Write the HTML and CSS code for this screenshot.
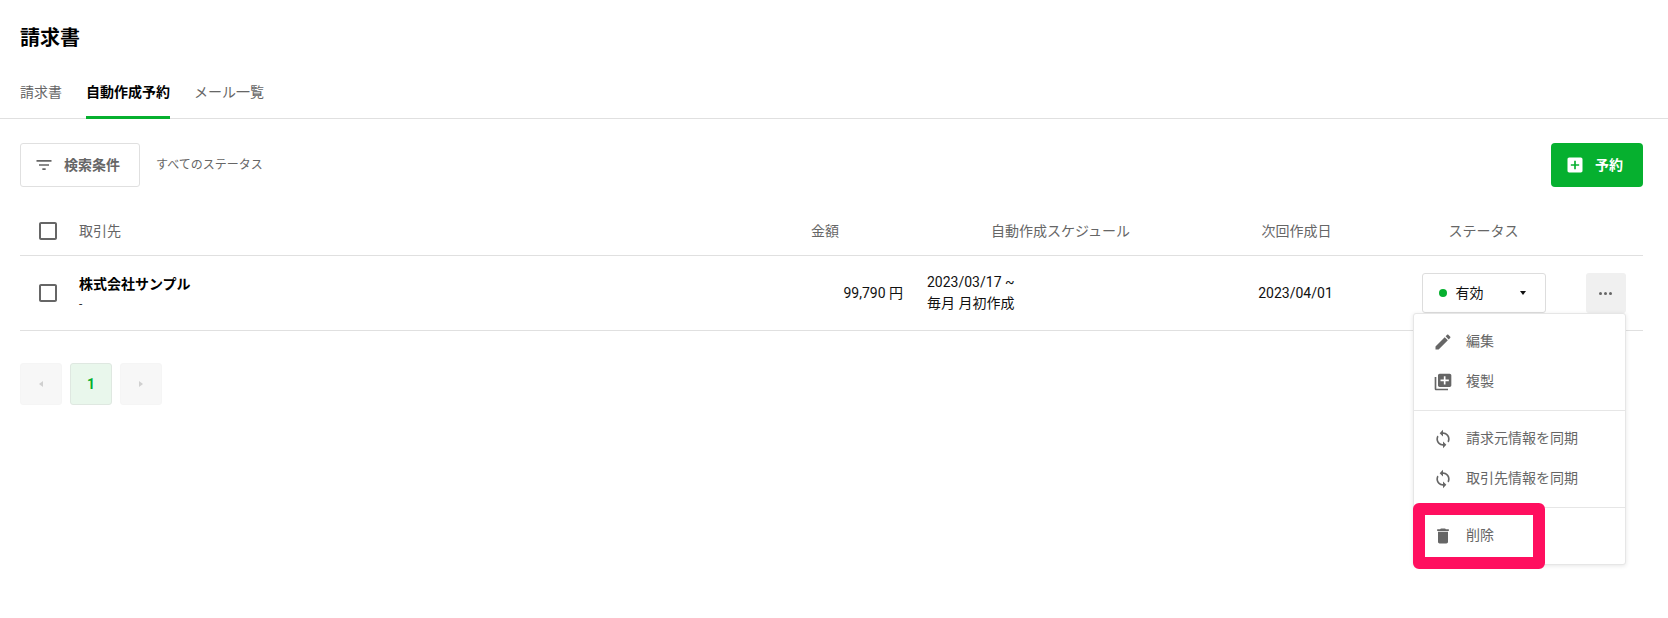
FILE: index.html
```html
<!DOCTYPE html>
<html lang="ja">
<head>
  <meta charset="UTF-8" />
  <title>請求書</title>
  <link rel="stylesheet" href="styles.css">
</head>
<body>
  <header class="page-header">
    <h1>請求書</h1>
    <nav class="tabs">
      <a class="tab">請求書</a>
      <a class="tab active">自動作成予約</a>
      <a class="tab">メール一覧</a>
    </nav>
  </header>

  <main class="content">
    <div class="toolbar">
      <button class="filter-btn" type="button">
        <svg class="icon" viewBox="0 0 24 24"><path d="M10 18h4v-2h-4v2zM3 6v2h18V6H3zm3 7h12v-2H6v2z"/></svg>
        <span class="label">検索条件</span>
      </button>
      <span class="filter-note">すべてのステータス</span>
      <button class="add-btn" type="button">
        <svg class="icon" viewBox="0 0 24 24"><path d="M19 3H5c-1.11 0-2 .9-2 2v14c0 1.1.89 2 2 2h14c1.1 0 2-.9 2-2V5c0-1.1-.9-2-2-2zm-2 10h-4v4h-2v-4H7v-2h4V7h2v4h4v2z"/></svg>
        <span class="label">予約</span>
      </button>
    </div>

    <div class="table-row table-head">
      <div class="cell-check">
        <svg class="check" viewBox="0 0 24 24"><path d="M19 5v14H5V5h14m0-2H5c-1.1 0-2 .9-2 2v14c0 1.1.9 2 2 2h14c1.1 0 2-.9 2-2V5c0-1.1-.9-2-2-2z"/></svg>
      </div>
      <div>取引先</div>
      <div class="center">金額</div>
      <div class="center cell-schedule">自動作成スケジュール</div>
      <div class="center">次回作成日</div>
      <div class="center">ステータス</div>
      <div></div>
    </div>

    <div class="table-row table-body">
      <div class="cell-check">
        <svg class="check" viewBox="0 0 24 24"><path d="M19 5v14H5V5h14m0-2H5c-1.1 0-2 .9-2 2v14c0 1.1.9 2 2 2h14c1.1 0 2-.9 2-2V5c0-1.1-.9-2-2-2z"/></svg>
      </div>
      <div class="partner">
        <strong>株式会社サンプル</strong>
        <span>-</span>
      </div>
      <div class="amount">99,790 円</div>
      <div class="cell-schedule schedule">2023/03/17 ~<br>毎月 月初作成</div>
      <div class="center next-date">2023/04/01</div>
      <div class="center">
        <div class="status-select">
          <i class="dot"></i>
          <span>有効</span>
          <i class="caret"></i>
        </div>
      </div>
      <div class="center">
        <button class="more-btn" type="button"><i></i><i></i><i></i></button>
      </div>
    </div>

    <div class="pager">
      <span class="page-btn"><i class="arrow-left"></i></span>
      <span class="page-btn current">1</span>
      <span class="page-btn"><i class="arrow-right"></i></span>
    </div>
  </main>

  <div class="menu">
    <div class="menu-item">
      <svg class="icon" viewBox="0 0 24 24"><path d="M3 17.25V21h3.75L17.81 9.94l-3.75-3.75L3 17.25zM20.71 7.04c.39-.39.39-1.02 0-1.41l-2.34-2.34c-.39-.39-1.02-.39-1.41 0l-1.83 1.83 3.75 3.75 1.83-1.83z"/></svg>
      <span class="label">編集</span>
    </div>
    <div class="menu-item">
      <svg class="icon" viewBox="0 0 24 24"><path d="M4 6H2v14c0 1.1.9 2 2 2h14v-2H4V6zm16-4H8c-1.1 0-2 .9-2 2v12c0 1.1.9 2 2 2h12c1.1 0 2-.9 2-2V4c0-1.1-.9-2-2-2zm-1 9h-4v4h-2v-4H9V9h4V5h2v4h4v2z"/></svg>
      <span class="label">複製</span>
    </div>
    <hr>
    <div class="menu-item">
      <svg class="icon" viewBox="0 0 24 24"><path d="M12 4V1L8 5l4 4V6c3.31 0 6 2.69 6 6 0 1.01-.25 1.97-.7 2.8l1.46 1.46C19.54 15.03 20 13.57 20 12c0-4.42-3.58-8-8-8zm0 14c-3.31 0-6-2.69-6-6 0-1.01.25-1.97.7-2.8L5.24 7.74C4.46 8.97 4 10.43 4 12c0 4.42 3.58 8 8 8v3l4-4-4-4v3z"/></svg>
      <span class="label">請求元情報を同期</span>
    </div>
    <div class="menu-item">
      <svg class="icon" viewBox="0 0 24 24"><path d="M12 4V1L8 5l4 4V6c3.31 0 6 2.69 6 6 0 1.01-.25 1.97-.7 2.8l1.46 1.46C19.54 15.03 20 13.57 20 12c0-4.42-3.58-8-8-8zm0 14c-3.31 0-6-2.69-6-6 0-1.01.25-1.97.7-2.8L5.24 7.74C4.46 8.97 4 10.43 4 12c0 4.42 3.58 8 8 8v3l4-4-4-4v3z"/></svg>
      <span class="label">取引先情報を同期</span>
    </div>
    <hr>
    <div class="menu-item">
      <svg class="icon" viewBox="0 0 24 24"><path d="M6 19c0 1.1.9 2 2 2h8c1.1 0 2-.9 2-2V7H6v12zM19 4h-3.5l-1-1h-5l-1 1H5v2h14V4z"/></svg>
      <span class="label">削除</span>
    </div>
    <div class="highlight"></div>
  </div>
</body>
</html>
```

FILE: styles.css
```css
* {
  box-sizing: border-box;
  margin: 0;
  padding: 0;
}
body {
  background: #fff;
  color: #111;
  font-family: Roboto, 'Noto Sans CJK JP', sans-serif;
  font-size: 14px;
  line-height: 20px;
  overflow: hidden;
}
button {
  font-family: inherit;
  cursor: pointer;
}
.label {
  margin-bottom: 2px;
}
.page-header {
  height: 119px;
  padding: 24px 20px 0;
  border-bottom: 1px solid #e0e0e0;
}
h1 {
  font-size: 20px;
  font-weight: 700;
  line-height: 28px;
  color: #000;
}
.tabs {
  display: flex;
  gap: 24px;
  margin-top: 19px;
}
.tab {
  height: 48px;
  padding-top: 11px;
  color: #666;
}
.tab.active {
  color: #000;
  font-weight: 700;
  border-bottom: 3px solid #06b02f;
}
.content {
  padding: 24px 25px 0 20px;
}
.toolbar {
  display: flex;
  align-items: center;
  height: 44px;
}
.icon {
  width: 20px;
  height: 20px;
  fill: #666;
  flex: none;
}
.filter-btn {
  display: flex;
  align-items: center;
  gap: 10px;
  width: 120px;
  height: 44px;
  padding-left: 13px;
  background: #fff;
  border: 1px solid #e0e0e0;
  border-radius: 3px;
  color: #666;
  font-size: 14px;
  font-weight: 700;
}
.filter-note {
  margin-left: 16px;
  font-size: 12px;
  color: #666;
}
.add-btn {
  display: flex;
  align-items: center;
  gap: 10px;
  width: 92px;
  height: 44px;
  margin-left: auto;
  padding-left: 14px;
  background: #06b02f;
  border: none;
  border-radius: 4px;
  color: #fff;
  font-size: 14px;
  font-weight: 700;
}
.add-btn .icon {
  fill: #fff;
}
.table-row {
  display: grid;
  grid-template-columns: 59px 668px 156px 291px 205px 169px 75px;
  align-items: center;
  border-bottom: 1px solid #e0e0e0;
}
.table-head {
  height: 49px;
  margin-top: 20px;
  color: #666;
}
.table-body {
  height: 75px;
}
.cell-check {
  display: flex;
  padding-left: 16px;
}
.check {
  width: 24px;
  height: 24px;
  fill: #666;
}
.center {
  display: flex;
  justify-content: center;
}
.cell-schedule {
  padding-left: 24px;
}
.partner strong {
  display: block;
  color: #000;
  font-weight: 700;
  line-height: 22px;
}
.partner span {
  display: block;
  font-size: 12px;
  line-height: 18px;
  color: #333;
}
.amount {
  text-align: right;
}
.schedule {
  line-height: 21px;
}
.next-date {
  padding-right: 2px;
}
.status-select {
  display: flex;
  align-items: center;
  width: 124px;
  height: 40px;
  padding-left: 16px;
  background: #fff;
  border: 1px solid #ddd;
  border-radius: 3px;
}
.dot {
  width: 8px;
  height: 8px;
  margin-right: 9px;
  background: #06b02f;
  border-radius: 50%;
}
.caret {
  width: 0;
  height: 0;
  margin-left: 36px;
  border-left: 3.5px solid transparent;
  border-right: 3.5px solid transparent;
  border-top: 4px solid #111;
}
.more-btn {
  display: flex;
  align-items: center;
  justify-content: center;
  gap: 2px;
  width: 40px;
  height: 40px;
  background: #f0f0f0;
  border: none;
  border-radius: 3px;
}
.more-btn i {
  width: 3px;
  height: 3px;
  background: #666;
  border-radius: 50%;
}
.pager {
  display: flex;
  gap: 8px;
  margin-top: 32px;
}
.page-btn {
  display: flex;
  align-items: center;
  justify-content: center;
  width: 42px;
  height: 42px;
  background: #f7f7f7;
  border: 1px solid #f5f5f5;
  border-radius: 3px;
}
.page-btn.current {
  background: #e9f7ec;
  border-color: #dfe8e1;
  color: #06b02f;
  font-weight: 700;
}
.arrow-left, .arrow-right {
  width: 0;
  height: 0;
  border-top: 3px solid transparent;
  border-bottom: 3px solid transparent;
}
.arrow-left {
  border-right: 4px solid #d0d0d0;
}
.arrow-right {
  border-left: 4px solid #d0d0d0;
}
.menu {
  position: absolute;
  left: 1413px;
  top: 313px;
  width: 213px;
  padding: 8px 0;
  background: #fff;
  border: 1px solid #e6e6e6;
  border-radius: 3px;
  box-shadow: 0 1px 4px rgba(0, 0, 0, 0.1);
  color: #666;
}
.menu-item {
  display: flex;
  align-items: center;
  gap: 13px;
  height: 40px;
  padding-left: 19px;
}
.menu hr {
  height: 1px;
  margin: 8px 0;
  background: #e6e6e6;
  border: none;
}
.highlight {
  position: absolute;
  left: -1px;
  top: 189px;
  width: 132px;
  height: 66px;
  border: 12px solid #ff0f5f;
  border-radius: 6px;
}
```
